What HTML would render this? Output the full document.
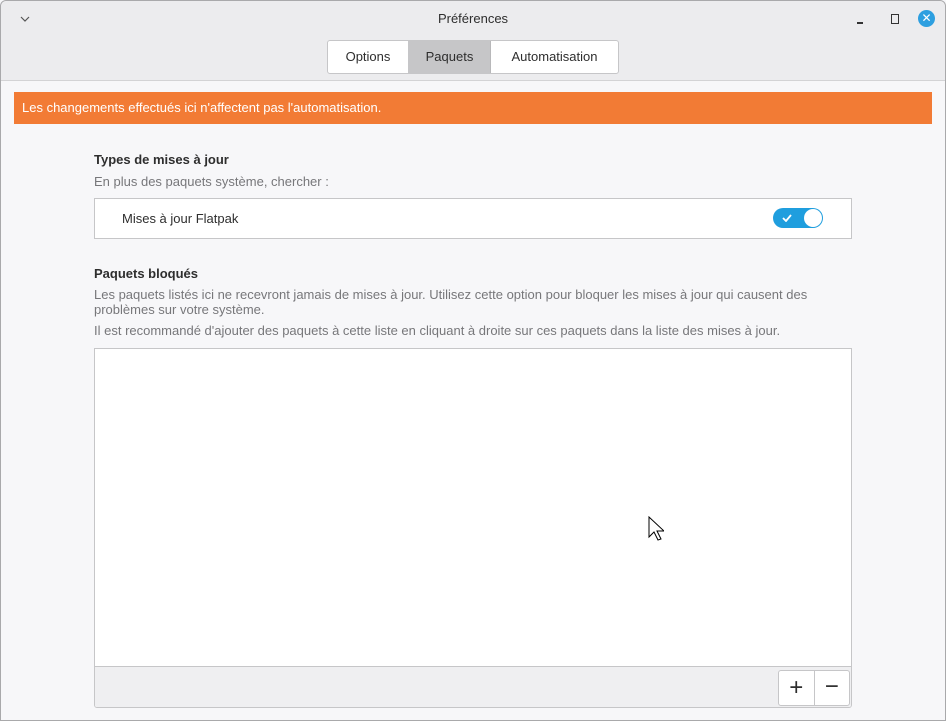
<!DOCTYPE html><html><head><style>
body{margin:0;width:946px;height:721px;overflow:hidden;font-family:"Liberation Sans",sans-serif;font-size:13px;color:#2e2e2e;background:#f7f7f9}
.win{position:absolute;left:0;top:0;width:944px;height:719px;border:1px solid #a9a9ab;border-radius:6px 6px 0 0;background:#f7f7f9}
.hdr{position:absolute;left:0;top:0;width:944px;height:79px;background:#ececee;border-bottom:1px solid #d3d3d5;border-radius:6px 6px 0 0}
.abs{position:absolute}
.tabs{position:absolute;left:326px;top:39px;height:32px;border:1px solid #c6c6c8;border-radius:3px;display:flex;background:#fff;overflow:hidden}
.tabs div{line-height:32px;text-align:center}
.muted{color:#77777a}
</style></head><body><div class="win">
<div class="hdr">
<svg class="abs" style="left:19px;top:14px" width="10" height="8"><path d="M1 2l4 4 4-4" fill="none" stroke="#555" stroke-width="1.2"/></svg>
<div class="abs" style="left:0;width:944px;top:10px;text-align:center">Préférences</div>
<div class="abs" style="left:856px;top:21px;width:6px;height:1.5px;background:#333"></div>
<div class="abs" style="left:890px;top:13px;width:6px;height:8px;border:1.3px solid #333"></div>
<div class="abs" style="left:917px;top:9px;width:17px;height:17px;border-radius:50%;background:#2d9fe0;color:#fff;text-align:center;line-height:17px;font-size:12px">✕</div>
<div class="tabs"><div style="width:80px;border-right:1px solid #c6c6c8">Options</div><div style="width:81px;background:#c6c6c8;border-right:1px solid #b8b8ba">Paquets</div><div style="width:127px">Automatisation</div></div>
</div>
<div class="abs" style="left:13px;top:91px;width:918px;height:32px;background:#f27b35;color:#fff;line-height:32px;text-indent:8px">Les changements effectués ici n'affectent pas l'automatisation.</div>
<div class="abs" style="left:93px;top:151px;font-weight:bold">Types de mises à jour</div>
<div class="abs muted" style="left:93px;top:173px">En plus des paquets système, chercher :</div>
<div class="abs" style="left:93px;top:197px;width:756px;height:39px;border:1px solid #c6c6c8;background:#fff">
<div class="abs" style="left:27px;top:12px">Mises à jour Flatpak</div>
<div class="abs" style="left:678px;top:9px;width:50px;height:20px;border-radius:10px;background:#1f9ede"><svg class="abs" style="left:9px;top:6px" width="10" height="8"><path d="M1 4l3 3 5-6" fill="none" stroke="#fff" stroke-width="1.8"/></svg><div class="abs" style="right:1px;top:1px;width:18px;height:18px;border-radius:50%;background:#fff"></div></div>
</div>
<div class="abs" style="left:93px;top:265px;font-weight:bold">Paquets bloqués</div>
<div class="abs muted" style="left:93px;top:286px;width:740px;line-height:15px">Les paquets listés ici ne recevront jamais de mises à jour. Utilisez cette option pour bloquer les mises à jour qui causent des problèmes sur votre système.</div>
<div class="abs muted" style="left:93px;top:322px">Il est recommandé d'ajouter des paquets à cette liste en cliquant à droite sur ces paquets dans la liste des mises à jour.</div>
<div class="abs" style="left:93px;top:347px;width:756px;height:358px;border:1px solid #c6c6c8;background:#fff;border-radius:0 0 3px 3px;overflow:hidden">
<div class="abs" style="left:0;top:317px;width:756px;height:41px;background:#efeff1;border-top:1px solid #c6c6c8"></div>
<div class="abs" style="left:683px;top:321px;width:70px;height:34px;border:1px solid #c6c6c8;border-radius:3px;background:#fff;display:flex">
<div style="width:35px;border-right:1px solid #c6c6c8;text-align:center;line-height:34px;font-size:24px">+</div><div style="width:35px;text-align:center;line-height:32px;font-size:24px">−</div></div>
</div>
<svg class="abs" style="left:647px;top:515px" width="16" height="26"><path d="M1 1v20l5-5 4 8 3-1-4-8h7z" fill="#fff" stroke="#000"/></svg>
</div></body></html>
